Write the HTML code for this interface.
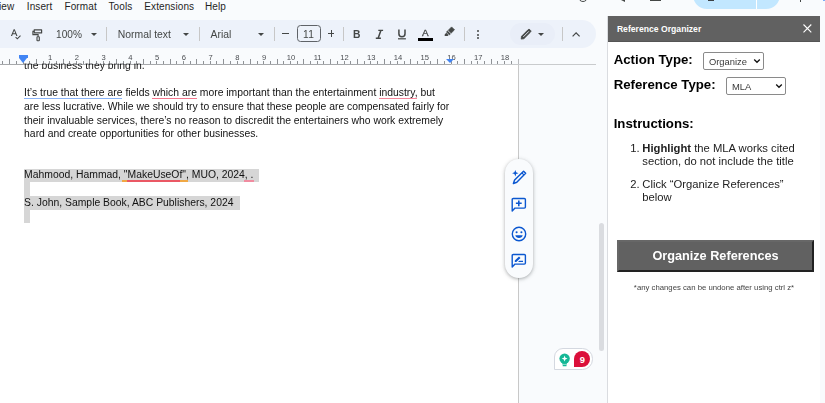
<!DOCTYPE html>
<html><head><meta charset="utf-8">
<style>
*{box-sizing:border-box;margin:0;padding:0}
html,body{width:825px;height:403px;overflow:hidden;background:#f9fbfd;font-family:"Liberation Sans",sans-serif;color:#1f1f1f}
.abs{position:absolute}
.g{will-change:transform}
.menu span{position:absolute;top:1.3px;letter-spacing:.1px;font-size:10px;line-height:12px;color:#1f1f1f;white-space:nowrap}
.tb{position:absolute;left:-20px;top:20.2px;width:615.5px;height:27.6px;background:#edf2fa;border-radius:14px}
.tt{position:absolute;font-size:10.15px;line-height:12px;color:#444746;white-space:nowrap;top:29.3px}
.sep{position:absolute;top:27px;width:1px;height:14px;background:#c7c7c7}
.caret{position:absolute;width:0;height:0;border-left:2.8px solid transparent;border-right:2.8px solid transparent;border-top:2.6px solid #444746;top:33px}
.page{position:absolute;left:0;top:64px;width:519px;height:339px;background:#fff;border-right:1px solid #c8c8c8}
.ln{position:absolute;left:24.1px;font-size:10.38px;line-height:13.6px;height:13.6px;white-space:nowrap;color:#121212}
.hl{position:absolute;background:#d6d6d6}
.ul{position:absolute;height:1.4px}
.side{position:absolute;left:607px;top:16px;width:213px;height:387px;background:#fff;border-left:1px solid #dadce0}
.shead{position:absolute;left:0;top:0;width:212px;height:25.5px;background:#616161;border-bottom:1px solid #555}
.h{position:absolute;left:5.7px;font-weight:bold;font-size:13.22px;line-height:15px;color:#000;white-space:nowrap}
.sel{position:absolute;height:17.5px;width:60.5px;border:1px solid #8a8a8a;border-radius:2px;background:#fff;font-size:9.4px;line-height:17.4px;padding-left:4.6px;color:#3a3a3a}
.li{position:absolute;font-size:11.25px;line-height:12.8px;color:#222;white-space:nowrap}
</style></head><body>

<!-- menu -->
<div class="menu">
<span style="left:-1px">iew</span>
<span style="left:26.8px">Insert</span>
<span style="left:64.5px">Format</span>
<span style="left:108.5px">Tools</span>
<span style="left:144.3px">Extensions</span>
<span style="left:205px">Help</span>
</div>

<!-- top right partial -->
<div class="abs" style="left:693px;top:-19.2px;width:87px;height:28px;border-radius:14px;background:#c2e7ff"></div>
<div class="abs" style="left:756px;top:0;width:1px;height:9px;background:#fff"></div>
<div class="abs" style="left:708px;top:0;width:6px;height:1px;background:#3c4043"></div>
<div class="abs" style="left:577.7px;top:-8.6px;width:10.5px;height:10.5px;border-radius:50%;border:1.8px solid #444746"></div>
<div class="abs" style="left:621px;top:0;width:0;height:0;border-left:0 solid transparent;border-right:4px solid #444746;border-bottom:2.5px solid transparent"></div>
<div class="abs" style="left:650px;top:0;width:10.5px;height:1px;background:#444746"></div>
<div class="abs" style="left:800px;top:0;width:1px;height:2px;background:#444746"></div>
<div class="abs" style="left:823px;top:0;width:2px;height:1px;background:#7cacf8"></div>

<!-- toolbar -->
<div class="tb"></div>
<div id="tbicons" class="g">
<!-- spellcheck -->
<svg class="abs" style="left:9px;top:27px" width="14" height="14" viewBox="0 0 14 14"><path d="M1.9 8.9 L4.7 2.3 H5.7 L8.5 8.9 H7.3 L6.65 7.3 H3.75 L3.1 8.9 Z M4.15 6.35 H6.25 L5.2 3.6 Z" fill="#444746"/><path d="M6.6 10.2 L8.3 11.8 L11.5 8.7" fill="none" stroke="#444746" stroke-width="1.1"/></svg>
<!-- paint format -->
<svg class="abs" style="left:31px;top:27.5px" width="14" height="14" viewBox="0 0 14 14"><path d="M3.2 1.9 H10.6 V4.9 H3.2 Z" fill="none" stroke="#444746" stroke-width="1.2" stroke-linejoin="round"/><path d="M3.2 3.4 H1.9 V6.6 H7.1 V8.6" fill="none" stroke="#444746" stroke-width="1.1"/><rect x="6" y="8.8" width="2.3" height="4" rx="0.5" fill="none" stroke="#444746" stroke-width="1.1"/></svg>
<span class="tt" style="left:56px">100%</span>
<svg class="abs" style="left:91.2px;top:32.8px" width="6" height="3" viewBox="0 0 6 3"><path d="M0 0 H6 L3 3 Z" fill="#444746"/></svg>
<div class="sep" style="left:106px"></div>
<span class="tt" style="left:117.8px;font-size:10.4px">Normal text</span>
<svg class="abs" style="left:183px;top:32.8px" width="6" height="3" viewBox="0 0 6 3"><path d="M0 0 H6 L3 3 Z" fill="#444746"/></svg>
<div class="sep" style="left:199px"></div>
<span class="tt" style="left:210.5px;font-size:10.4px">Arial</span>
<svg class="abs" style="left:257.6px;top:32.8px" width="6" height="3" viewBox="0 0 6 3"><path d="M0 0 H6 L3 3 Z" fill="#444746"/></svg>
<div class="sep" style="left:274px"></div>
<div class="abs" style="left:282.4px;top:33px;width:6.8px;height:1.1px;background:#444746"></div>
<div class="abs" style="left:296.5px;top:25.3px;width:24.2px;height:16.8px;border:1px solid #5f6368;border-radius:3.5px"></div>
<span class="tt" style="left:296.7px;width:23.7px;text-align:center;font-size:10.2px;letter-spacing:.3px;top:29.1px">11</span>
<div class="abs" style="left:327.6px;top:33px;width:6.9px;height:1.1px;background:#444746"></div>
<div class="abs" style="left:330.5px;top:30.1px;width:1.1px;height:6.9px;background:#444746"></div>
<div class="sep" style="left:342.5px"></div>
<span class="tt" style="left:353px;font-weight:bold;font-size:10.3px;top:28.9px">B</span>
<svg class="abs" style="left:374px;top:28px" width="12" height="12" viewBox="0 0 12 12"><path d="M4.3 1.7 H9.1 V3.1 H7.5 L5.2 9.5 H6.9 V10.9 H1.8 V9.5 H3.6 L5.9 3.1 H4.3 Z" fill="#444746"/></svg>
<svg class="abs" style="left:396px;top:28px" width="12" height="14" viewBox="0 0 12 14"><path d="M2.9 1.4 V5.7 A3.05 3.05 0 0 0 9 5.7 V1.4" fill="none" stroke="#444746" stroke-width="1.5"/><rect x="2" y="10.2" width="7.9" height="1.2" fill="#444746"/></svg>
<span class="tt" style="left:422.1px;font-size:9.9px;top:26.7px;-webkit-text-stroke:.3px #444746">A</span>
<div class="abs" style="left:417.6px;top:38px;width:15.5px;height:2.5px;background:#000"></div>
<!-- highlighter -->
<svg class="abs" style="left:443px;top:26px" width="14" height="14" viewBox="0 0 14 14"><path d="M8.6 0.9 L11.5 3.8 L6.4 8.9 L3.5 6 Z" fill="#444746" stroke="#444746" stroke-width=".7" stroke-linejoin="round"/><path d="M4.7 4.4 L8 7.7" stroke="#edf2fa" stroke-width=".8" fill="none"/><path d="M3.3 6.8 L5.6 9.1 L4.7 10.1 H1.7 V8.5 Z" fill="#444746"/></svg>
<div class="sep" style="left:463.5px"></div>
<div class="abs" style="left:477.4px;top:30.3px;width:2px;height:2px;border-radius:50%;background:#444746"></div>
<div class="abs" style="left:477.4px;top:33.5px;width:2px;height:2px;border-radius:50%;background:#444746"></div>
<div class="abs" style="left:477.4px;top:36.7px;width:2px;height:2px;border-radius:50%;background:#444746"></div>
<div class="abs" style="left:509.7px;top:22.5px;width:45.5px;height:22px;border-radius:11px;background:#e9eef8"></div>
<!-- pencil -->
<svg class="abs" style="left:519px;top:27px" width="14" height="14" viewBox="0 0 14 14"><path d="M2.2 12.1 L2.5 9.3 L9.2 2.6 Q10 1.8 10.8 2.6 L11.6 3.4 Q12.4 4.2 11.6 5 L4.9 11.7 Z" fill="#444746" stroke="#444746" stroke-width=".8" stroke-linejoin="round"/><path d="M4.3 9.9 L9.9 4.3" stroke="#edf2fa" stroke-width=".9" fill="none"/></svg>
<svg class="abs" style="left:538px;top:32.8px" width="6" height="3" viewBox="0 0 6 3"><path d="M0 0 H6 L3 3 Z" fill="#444746"/></svg>
<div class="sep" style="left:562px"></div>
<svg class="abs" style="left:570px;top:29px" width="12" height="10" viewBox="0 0 12 10"><path d="M2.6 7.4 L6.1 3.9 L9.6 7.4" fill="none" stroke="#444746" stroke-width="1.2"/></svg>
</div>

<!-- page -->
<div class="page"></div>
<div id="doc" class="g">
<div class="hl" style="left:24.0px;top:168.6px;width:235.0px;height:13.6px"></div>
<div class="hl" style="left:24.0px;top:182.2px;width:5.6px;height:13.9px"></div>
<div class="hl" style="left:24.0px;top:196.1px;width:215.6px;height:13.9px"></div>
<div class="hl" style="left:24.0px;top:210.0px;width:5.6px;height:12.9px"></div>
<div class="ln" style="top:86.25px">It’s true that there are fields which are more important than the entertainment industry, but</div>
<div class="ln" style="top:99.94px">are less lucrative. While we should try to ensure that these people are compensated fairly for</div>
<div class="ln" style="top:113.63px">their invaluable services, there’s no reason to discredit the entertainers who work extremely</div>
<div class="ln" style="top:127.32px">hard and create opportunities for other businesses.</div>
<div class="ln" style="top:168.39px">Mahmood, Hammad, "MakeUseOf", MUO, 2024, .</div>
<div class="ln" style="top:195.77px">S. John, Sample Book, ABC Publishers, 2024</div>
<div class="ul" style="left:24.3px;top:97.8px;width:97.7px;background:#8ab4f8"></div>
<div class="ul" style="left:151.9px;top:97.8px;width:45.4px;background:#f5798f"></div>
<div class="ul" style="left:378.7px;top:97.8px;width:38.6px;background:#f5869a"></div>
<div class="ul" style="left:122px;top:180.3px;width:66px;background:#f0a844"></div>
<div class="ul" style="left:127px;top:180.3px;width:53.2px;background:#ea5864"></div>
<div class="ul" style="left:244.4px;top:180.3px;width:9.6px;background:#f08ca0"></div>
</div>

<!-- ruler -->
<div id="ruler" class="g">
<style>#ruler i{position:absolute;width:1px;background:#8f9296}#ruler b{position:absolute;top:52.6px;width:20px;text-align:center;font-weight:normal;font-size:7.6px;line-height:9px;color:#4a4d51}</style>
<i style="left:2px;top:61px;height:3px"></i>
<i style="left:9px;top:59px;height:5px"></i>
<i style="left:16px;top:61px;height:3px"></i>
<i style="left:23px;top:61px;height:3px"></i>
<i style="left:29px;top:61px;height:3px"></i>
<i style="left:36px;top:59px;height:5px"></i>
<i style="left:43px;top:61px;height:3px"></i>
<i style="left:49px;top:61px;height:3px"></i>
<b style="left:40.15px">1</b>
<i style="left:56px;top:61px;height:3px"></i>
<i style="left:63px;top:59px;height:5px"></i>
<i style="left:69px;top:61px;height:3px"></i>
<i style="left:76px;top:61px;height:3px"></i>
<b style="left:66.90px">2</b>
<i style="left:83px;top:61px;height:3px"></i>
<i style="left:89px;top:59px;height:5px"></i>
<i style="left:96px;top:61px;height:3px"></i>
<i style="left:103px;top:61px;height:3px"></i>
<b style="left:93.65px">3</b>
<i style="left:109px;top:61px;height:3px"></i>
<i style="left:116px;top:59px;height:5px"></i>
<i style="left:123px;top:61px;height:3px"></i>
<i style="left:130px;top:61px;height:3px"></i>
<b style="left:120.40px">4</b>
<i style="left:136px;top:61px;height:3px"></i>
<i style="left:143px;top:59px;height:5px"></i>
<i style="left:150px;top:61px;height:3px"></i>
<i style="left:156px;top:61px;height:3px"></i>
<b style="left:147.15px">5</b>
<i style="left:163px;top:61px;height:3px"></i>
<i style="left:170px;top:59px;height:5px"></i>
<i style="left:176px;top:61px;height:3px"></i>
<i style="left:183px;top:61px;height:3px"></i>
<b style="left:173.90px">6</b>
<i style="left:190px;top:61px;height:3px"></i>
<i style="left:196px;top:59px;height:5px"></i>
<i style="left:203px;top:61px;height:3px"></i>
<i style="left:210px;top:61px;height:3px"></i>
<b style="left:200.65px">7</b>
<i style="left:216px;top:61px;height:3px"></i>
<i style="left:223px;top:59px;height:5px"></i>
<i style="left:230px;top:61px;height:3px"></i>
<i style="left:237px;top:61px;height:3px"></i>
<b style="left:227.40px">8</b>
<i style="left:243px;top:61px;height:3px"></i>
<i style="left:250px;top:59px;height:5px"></i>
<i style="left:257px;top:61px;height:3px"></i>
<i style="left:263px;top:61px;height:3px"></i>
<b style="left:254.15px">9</b>
<i style="left:270px;top:61px;height:3px"></i>
<i style="left:277px;top:59px;height:5px"></i>
<i style="left:283px;top:61px;height:3px"></i>
<i style="left:290px;top:61px;height:3px"></i>
<b style="left:280.90px">10</b>
<i style="left:297px;top:61px;height:3px"></i>
<i style="left:303px;top:59px;height:5px"></i>
<i style="left:310px;top:61px;height:3px"></i>
<i style="left:317px;top:61px;height:3px"></i>
<b style="left:307.65px">11</b>
<i style="left:323px;top:61px;height:3px"></i>
<i style="left:330px;top:59px;height:5px"></i>
<i style="left:337px;top:61px;height:3px"></i>
<i style="left:344px;top:61px;height:3px"></i>
<b style="left:334.40px">12</b>
<i style="left:350px;top:61px;height:3px"></i>
<i style="left:357px;top:59px;height:5px"></i>
<i style="left:364px;top:61px;height:3px"></i>
<i style="left:370px;top:61px;height:3px"></i>
<b style="left:361.15px">13</b>
<i style="left:377px;top:61px;height:3px"></i>
<i style="left:384px;top:59px;height:5px"></i>
<i style="left:390px;top:61px;height:3px"></i>
<i style="left:397px;top:61px;height:3px"></i>
<b style="left:387.90px">14</b>
<i style="left:404px;top:61px;height:3px"></i>
<i style="left:410px;top:59px;height:5px"></i>
<i style="left:417px;top:61px;height:3px"></i>
<i style="left:424px;top:61px;height:3px"></i>
<b style="left:414.65px">15</b>
<i style="left:430px;top:61px;height:3px"></i>
<i style="left:437px;top:59px;height:5px"></i>
<i style="left:444px;top:61px;height:3px"></i>
<i style="left:451px;top:61px;height:3px"></i>
<b style="left:441.40px">16</b>
<i style="left:457px;top:61px;height:3px"></i>
<i style="left:464px;top:59px;height:5px"></i>
<i style="left:471px;top:61px;height:3px"></i>
<i style="left:477px;top:61px;height:3px"></i>
<b style="left:468.15px">17</b>
<i style="left:484px;top:61px;height:3px"></i>
<i style="left:491px;top:59px;height:5px"></i>
<i style="left:497px;top:61px;height:3px"></i>
<i style="left:504px;top:61px;height:3px"></i>
<b style="left:494.90px">18</b>
<i style="left:511px;top:61px;height:3px"></i>
<i style="left:518px;top:59px;height:5px;background:#b9bbbe"></i>
<div class="abs" style="left:0;top:64px;width:596px;height:1px;background:#c9cbcd"></div>
<div class="abs" style="left:0;top:64px;width:451px;height:1px;background:#a6a8ab"></div>
<div class="abs" style="left:19px;top:55.1px;width:9px;height:2.6px;background:#4285f4"></div>
<div class="abs" style="left:19px;top:58px;width:0;height:0;border-left:4.5px solid transparent;border-right:4.5px solid transparent;border-top:5.4px solid #4285f4"></div>
<div class="abs" style="left:446.3px;top:58.6px;width:0;height:0;border-left:4.4px solid transparent;border-right:4.4px solid transparent;border-top:4.4px solid #4285f4"></div>
</div>

<div class="abs g" style="left:0;top:64px;width:518px;height:20px;overflow:hidden"><div class="ln" style="top:-4.6px">the business they bring in.</div></div>
<div class="abs g" style="left:0;top:63px;width:518px;height:1px;overflow:hidden;opacity:.45"><div class="ln" style="top:-3.6px">the business they bring in.</div></div>

<!-- floating pill -->
<div id="pill">
<div class="abs" style="left:504.5px;top:159px;width:28px;height:118.5px;border-radius:14px;background:#f9fbfd;box-shadow:0 1px 3px rgba(60,64,67,.3),0 1px 4px 1px rgba(60,64,67,.12)"></div>
<!-- magic pencil -->
<svg class="abs" style="left:510px;top:167.5px" width="19" height="19" viewBox="0 0 19 19"><path d="M3.4 15.5 L4.6 12.1 L13.55 3.25 L15.65 5.35 L6.8 14.3 Z" fill="none" stroke="#0b57d0" stroke-width="1.45" stroke-linejoin="round"/><path d="M12 5 L13.9 6.9" stroke="#0b57d0" stroke-width="1.1" fill="none"/><path d="M5.3 2 L6.15 4.35 L8.5 5.2 L6.15 6.05 L5.3 8.4 L4.45 6.05 L2.1 5.2 L4.45 4.35 Z" fill="#0b57d0"/></svg>
<!-- add comment -->
<svg class="abs" style="left:510.1px;top:196px" width="18" height="18" viewBox="0 0 18 18"><path d="M2.2 15 V3.6 Q2.2 2.5 3.3 2.5 H14.3 Q15.4 2.5 15.4 3.6 V11 Q15.4 12.1 14.3 12.1 H5 Z" fill="none" stroke="#0b57d0" stroke-width="1.4" stroke-linejoin="round"/><path d="M8.8 4.4 V10.2 M5.9 7.3 H11.7" stroke="#0b57d0" stroke-width="1.6" fill="none"/></svg>
<!-- emoji -->
<svg class="abs" style="left:510.2px;top:224.5px" width="18" height="18" viewBox="0 0 18 18"><circle cx="9" cy="9" r="6.7" fill="none" stroke="#0b57d0" stroke-width="1.4"/><circle cx="6.6" cy="7.2" r="1.05" fill="#0b57d0"/><circle cx="11.4" cy="7.2" r="1.05" fill="#0b57d0"/><path d="M5.3 10.2 H12.7 A3.8 3.6 0 0 1 5.3 10.2 Z" fill="#0b57d0"/></svg>
<!-- suggest edits -->
<svg class="abs" style="left:510.2px;top:252.3px" width="18" height="18" viewBox="0 0 18 18"><path d="M2.2 15 V3.6 Q2.2 2.5 3.3 2.5 H14.3 Q15.4 2.5 15.4 3.6 V11 Q15.4 12.1 14.3 12.1 H5 Z" fill="none" stroke="#0b57d0" stroke-width="1.4" stroke-linejoin="round"/><path d="M4.8 10 V8.5 L9 4.5 L10.5 6 L6.3 10 Z M9.3 8.7 H13 V10 H8 Z" fill="#0b57d0"/></svg>
</div>

<!-- scrollbar -->
<div class="abs" style="left:599px;top:222.5px;width:5px;height:128.5px;border-radius:2.5px;background:#dadce0"></div>

<!-- grammarly -->
<div id="gram">
<div class="abs" style="left:554.3px;top:348.4px;width:38.6px;height:21.4px;background:#fff;border:1px solid #d4d8e0;border-radius:9px 10.6px 10.6px 0"></div>
<svg class="abs" style="left:558px;top:352px" width="14" height="16" viewBox="0 0 14 16"><circle cx="6.6" cy="6.6" r="5.2" fill="#15b896"/><rect x="4.3" y="11.2" width="4.6" height="1.3" fill="#15b896"/><rect x="4.6" y="13" width="4" height="1.2" rx="0.5" fill="#15b896"/><path d="M6.6 3.6 L7.4 5.8 L9.6 6.6 L7.4 7.4 L6.6 9.6 L5.8 7.4 L3.6 6.6 L5.8 5.8 Z" fill="#fff"/></svg>
<div class="abs" style="left:574.3px;top:351.2px;width:16px;height:16px;background:#db0f3a;border-radius:8px 8px 8px 0;color:#fff;font-weight:bold;font-size:9.4px;line-height:18.6px;overflow:hidden;text-align:center">9</div>
</div>

<!-- sidebar -->
<div class="side">
 <div class="shead"></div>
 <div class="abs" style="left:8.9px;top:7.6px;font-weight:bold;font-size:8.65px;line-height:11px;color:#fff;white-space:nowrap">Reference Organizer</div>
 <svg class="abs" style="left:194px;top:6.9px" width="11" height="11" viewBox="0 0 11 11"><path d="M1.5 1.5 L9.3 9.3 M9.3 1.5 L1.5 9.3" stroke="#fff" stroke-width="1.1" fill="none"/></svg>
 <div class="g" style="position:absolute;left:0;top:0;width:212px;height:387px">
 <div class="h" style="top:35.6px">Action Type:</div>
 <div class="sel" style="left:95.3px;top:36.2px">Organize</div>
 <svg class="abs" style="left:144.5px;top:41px" width="8" height="8" viewBox="0 0 8 8"><path d="M1.2 2.5 L4 5.3 L6.8 2.5" stroke="#111" stroke-width="1.3" fill="none"/></svg>
 <div class="h" style="top:60.9px">Reference Type:</div>
 <div class="sel" style="left:118.3px;top:61.2px;width:59.7px">MLA</div>
 <svg class="abs" style="left:167.2px;top:66px" width="8" height="8" viewBox="0 0 8 8"><path d="M1.2 2.5 L4 5.3 L6.8 2.5" stroke="#111" stroke-width="1.3" fill="none"/></svg>
 <div class="h" style="top:99.6px">Instructions:</div>
 <div class="li" style="left:22.3px;top:126.3px">1.</div>
 <div class="li" style="left:34.3px;top:126.3px"><b>Highlight</b> the MLA works cited</div>
 <div class="li" style="left:34.3px;top:139.1px">section, do not include the title</div>
 <div class="li" style="left:22.3px;top:162.4px">2.</div>
 <div class="li" style="left:34.3px;top:162.4px">Click “Organize References”</div>
 <div class="li" style="left:34.3px;top:175.2px">below</div>
 <div class="abs" style="left:9px;top:224px;width:197px;height:31.6px;background:#616161;border:2px solid;border-color:#676767 #222 #222 #676767;color:#fff;font-weight:bold;font-size:12.7px;line-height:28px;text-align:center">Organize References</div>
 <div class="abs" style="left:0;top:267.2px;width:212px;text-align:center;font-size:7.76px;line-height:10px;color:#444;padding-left:0px">*any changes can be undone after using ctrl z*</div>
 </div>
</div>
</body></html>
